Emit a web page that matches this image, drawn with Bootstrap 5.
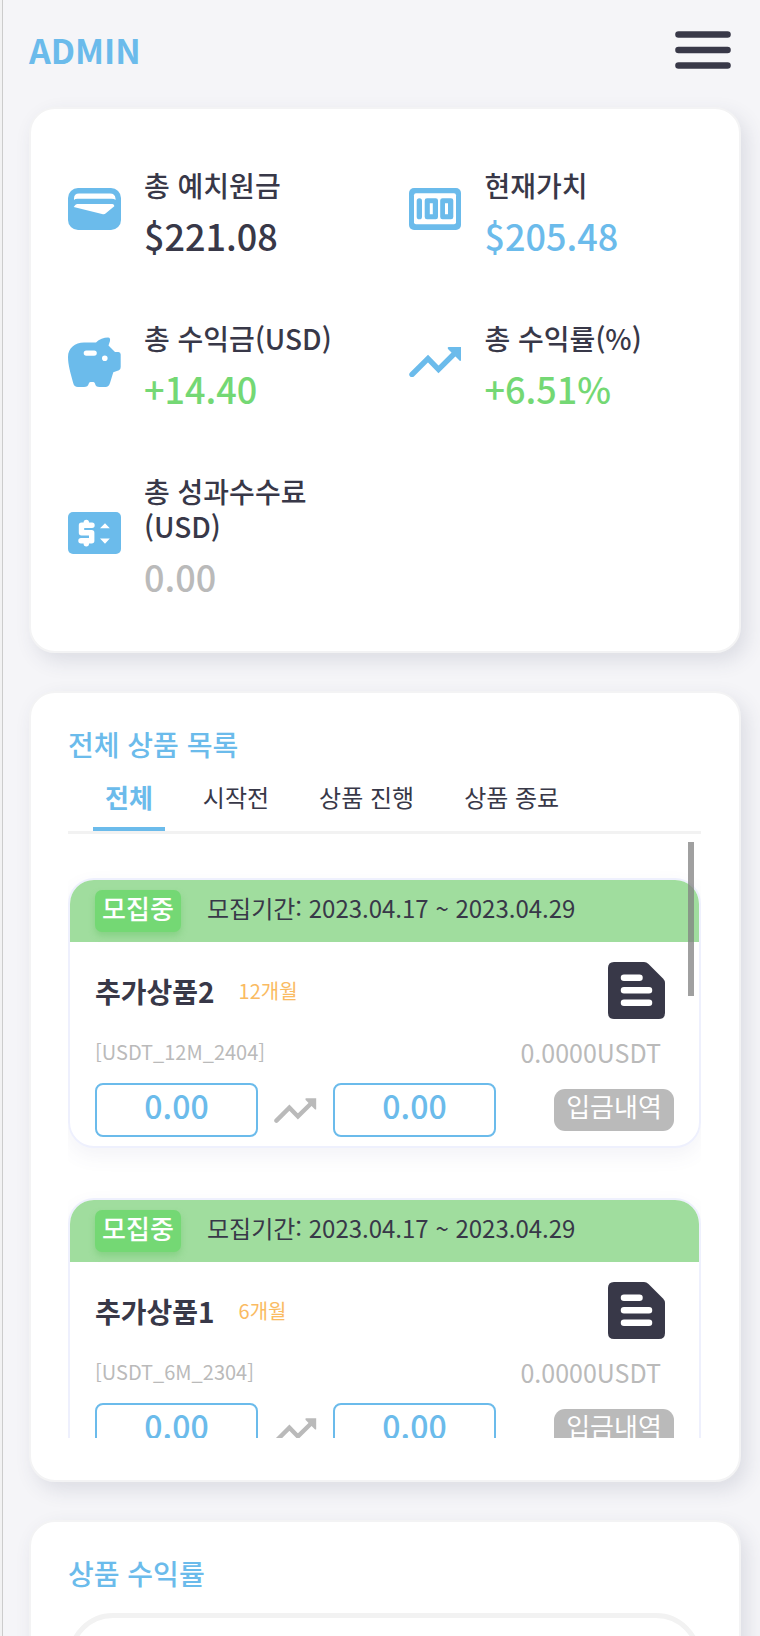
<!DOCTYPE html>
<html lang="ko">
<head>
<meta charset="utf-8">
<meta name="viewport" content="width=device-width, initial-scale=1">
<title>ADMIN</title>
<link href="https://cdn.jsdelivr.net/npm/bootstrap@5.3.0/dist/css/bootstrap.min.css" rel="stylesheet">
<style>
:root { --ink:#383848; --sky:#6bbbeb; --leaf:#74d874; --ash:#bababa; --haze:#f5f5f8; }
body { background:#f2f2f3; color:var(--ink); font-family:"Noto Sans CJK KR","Noto Sans",sans-serif; padding-left:2px; }
.screen { background:var(--haze); border-left:1px solid #ccc; }
.topbar { height:107px; padding:0 29px 8px 26px; }
.brand { font-size:34px; line-height:48px; color:var(--sky); }
.menu-btn svg, .menu-btn { display:block; }
.panel { margin:0 19px 38px 26px; padding:0 38px 0 37px; background:#fff; border:2px solid #f3f3f4; border-radius:26px; box-shadow:6px 8px 20px rgba(56,60,90,.13); flex:none; }
.sky { color:var(--sky); } .leaf { color:var(--leaf); } .ash { color:var(--ash); }
.stats { display:grid; grid-template-columns:1fr 1fr; gap:59px 48px; padding:59px 0 48px; }
.stat { gap:23px; }
.stat-icon { width:53px; margin-bottom:12px; color:var(--sky); flex:none; }
.stat-icon svg { display:block; margin:auto; }
.stat dt { font-size:28px; line-height:35px; font-weight:500; }
.stat dd { font-size:36px; line-height:53px; font-weight:500; margin:6px 0 0; }
.panel-title { font-size:28px; line-height:35px; font-weight:500; color:var(--sky); margin:0; padding-top:34px; }
.tabs { border-bottom:3px solid #f2f2f2; padding-left:25px; gap:26px; margin-top:14px; }
.tabs button { background:none; border:0; border-bottom:4px solid transparent; padding:0 12px 10px; height:55px; font-size:24px; line-height:36px; color:var(--ink); }
.tabs button.active { color:var(--sky); border-color:var(--sky); font-size:26px; font-weight:700; }
.scroll-wrap { position:relative; margin-bottom:42px; }
.scroll-area { height:604px; overflow-y:auto; scrollbar-width:none; padding-top:44px; }
.scroll-area::-webkit-scrollbar { display:none; }
.thumb { position:absolute; top:8px; right:7px; width:6px; height:154px; background:rgba(128,128,128,.75); }
.product { border:2px solid #eef0fd; border-radius:26px; overflow:hidden; margin-bottom:50px; box-shadow:0 8px 20px rgba(80,80,140,.07); }
.product header { height:62px; background:#a0dd9e; padding:0 25px; gap:26px; font-size:24px; }
.state { background:var(--leaf); color:#fff; font-size:26px; line-height:36px; height:42px; width:86px; border-radius:7px; font-weight:500; text-align:center; box-shadow:0 4px 6px rgba(90,190,90,.35); }
.period { line-height:36px; padding-bottom:6px; }
.product-body { padding:20px 25px 9px; }
.product-name { font-size:28px; line-height:36px; font-weight:700; margin:0; }
.term { font-size:20px; line-height:36px; color:#fabb62; }
.line-top { height:57px; padding-right:9px; }
.line-code { font-size:25px; line-height:36px; margin:15px 0 13px; padding-right:13px; }
.code { font-size:20px; }
.amount { width:163px; height:54px; border:2px solid var(--sky); border-radius:8px; font-size:32px; line-height:40px; font-weight:500; color:var(--sky); text-align:center; }
.pay-btn { width:120px; height:42px; border:0; border-radius:11px; background:var(--ash); color:#fff; font-size:26px; line-height:34px; padding:0 0 8px; white-space:nowrap; }
.chart-box { margin-top:22px; height:240px; border:5px solid #f2f2f2; border-radius:45px; }
</style>
</head>
<body>
<svg class="d-none" aria-hidden="true">
  <symbol id="trend" viewBox="0 0 53 30"><path d="M3 27.500L19 11.500L29.500 22.300L46 6" fill="none" stroke="currentColor" stroke-width="5.400" stroke-linecap="round"/><path d="M39.500 0H52V13.500Q51 14.500 50 13L39 2Q38 .5 39.500 0Z" fill="currentColor"/></symbol>
  <symbol id="doc" viewBox="0 0 57 57"><path d="M6 0H36Q38.500 0 40.500 2L55 16.500Q57 18.500 57 21V51Q57 57 51 57H6Q0 57 0 51V6Q0 0 6 0Z" fill="#383848"/><path d="M16 15.800H31.500M16 28.300H41M16 40.800H41" stroke="#fff" stroke-width="6.500" stroke-linecap="round"/></symbol>
</svg>
<div class="screen vh-100 overflow-hidden d-flex flex-column">
  <nav class="topbar d-flex align-items-center justify-content-between flex-shrink-0">
    <a href="#" class="brand fw-bold text-decoration-none">ADMIN</a>
    <button type="button" class="menu-btn border-0 bg-transparent p-0" aria-label="메뉴">
      <svg width="56" height="38" viewBox="0 0 56 38"><path d="M3.500 3.500H52.500M3.500 19H52.500M3.500 34.500H52.500" stroke="#383848" stroke-width="6.600" stroke-linecap="round"/></svg>
    </button>
  </nav>

  <section class="panel">
    <dl class="stats mb-0">
      <div class="stat d-flex align-items-center">
        <span class="stat-icon"><svg width="53" height="42" viewBox="0 0 53 42"><rect width="53" height="42" rx="10" fill="currentColor"/><path d="M6 12V10.500Q6 5.500 11 5.500H42Q47 5.500 47.500 10.500V12Q46.500 10.800 43.500 10.800H9.500Q7 10.800 6 12ZM5.700 19L7.500 16.800Q8.300 16 9.500 16H44.500Q46.500 16.500 46.300 18.200L37.500 25.500Q36.500 26.500 35 26.200Z" fill="#fff"/></svg></span>
        <div><dt>총 예치원금</dt><dd>$221.08</dd></div>
      </div>
      <div class="stat d-flex align-items-center">
        <span class="stat-icon"><svg width="52" height="42" viewBox="0 0 52 42"><rect width="52" height="42" rx="5" fill="currentColor"/><rect x="5" y="5.300" width="42" height="31" rx="2" fill="#fff"/><rect x="7.700" y="10.300" width="5.300" height="21" rx="2.600" fill="currentColor"/><path fill-rule="evenodd" d="M18 10.300H26.700Q29 10.300 29 12.600V29Q29 31.300 26.700 31.300H18Q15.700 31.300 15.700 29V12.600Q15.700 10.300 18 10.300ZM20.800 15.300V26.300H23.800V15.300ZM33.500 10.300H42Q44.300 10.300 44.300 12.600V29Q44.300 31.300 42 31.300H33.500Q31.200 31.300 31.200 29V12.600Q31.200 10.300 33.500 10.300ZM36 15.300V26.300H39V15.300Z" fill="currentColor"/></svg></span>
        <div><dt>현재가치</dt><dd class="sky">$205.48</dd></div>
      </div>
      <div class="stat d-flex align-items-center">
        <span class="stat-icon"><svg width="53" height="50" viewBox="0 0 53 50"><path fill-rule="evenodd" d="M0 20C0 11 7 5.500 16 5.500H28C31 2 36 .5 40 .5C42 .5 42.300 2 42 4L40.500 8.500L47 15H50.500Q52.700 15 52.700 17.500V30Q52.700 32.500 51 33.300L45.300 35.300L42 46Q40.800 50 37.500 50H31.500Q27.500 50 27 46.500Q26.500 45 25.500 45H22.500Q21 45 20.800 46.500Q20 50 16 50H10Q6 50 5.200 46C2.500 36 0 28 0 20ZM18.300 13.500A2.500 2.500 0 0 0 18.300 18.700H26.200A2.500 2.500 0 0 0 26.200 13.500ZM34 21.300A2.800 2.800 0 1 0 39.600 21.300A2.800 2.800 0 1 0 34 21.300Z" fill="currentColor"/></svg></span>
        <div><dt>총 수익금(USD)</dt><dd class="leaf">+14.40</dd></div>
      </div>
      <div class="stat d-flex align-items-center">
        <span class="stat-icon"><svg width="53" height="30"><use href="#trend"/></svg></span>
        <div><dt>총 수익률(%)</dt><dd class="leaf">+6.51%</dd></div>
      </div>
      <div class="stat d-flex align-items-center">
        <span class="stat-icon"><svg width="53" height="42" viewBox="0 0 53 42"><rect width="53" height="42" rx="5" fill="currentColor"/><path d="M24 13.300H13.500V20.800H23.700V28.700H13M18.300 13V10.500M18.300 29V31.800" fill="none" stroke="#fff" stroke-width="5.400" stroke-linecap="round" stroke-linejoin="round"/><path d="M32 16.300L37 11.200L41.800 16.300ZM32 26.500H41.800L37 31.800Z" fill="#fff"/></svg></span>
        <div><dt>총 성과수수료(USD)</dt><dd class="ash">0.00</dd></div>
      </div>
    </dl>
  </section>

  <section class="panel">
    <h2 class="panel-title">전체 상품 목록</h2>
    <div class="tabs d-flex" role="tablist">
      <button type="button" role="tab" class="active" aria-selected="true">전체</button>
      <button type="button" role="tab" aria-selected="false">시작전</button>
      <button type="button" role="tab" aria-selected="false">상품 진행</button>
      <button type="button" role="tab" aria-selected="false">상품 종료</button>
    </div>
    <div class="scroll-wrap">
      <div class="scroll-area">
        <article class="product">
          <header class="d-flex align-items-center"><span class="state">모집중</span><span class="period">모집기간: 2023.04.17 ~ 2023.04.29</span></header>
          <div class="product-body">
            <div class="line-top d-flex align-items-center justify-content-between">
              <div class="d-flex align-items-center gap-4"><h3 class="product-name">추가상품2</h3><span class="term">12개월</span></div>
              <svg width="57" height="57"><use href="#doc"/></svg>
            </div>
            <div class="line-code ash d-flex justify-content-between"><span class="code">[USDT_12M_2404]</span><span>0.0000USDT</span></div>
            <div class="d-flex align-items-center justify-content-between">
              <div class="d-flex align-items-center gap-3"><div class="amount">0.00</div><svg class="ash" width="43" height="25"><use href="#trend"/></svg><div class="amount">0.00</div></div>
              <button type="button" class="pay-btn">입금내역</button>
            </div>
          </div>
        </article>
        <article class="product">
          <header class="d-flex align-items-center"><span class="state">모집중</span><span class="period">모집기간: 2023.04.17 ~ 2023.04.29</span></header>
          <div class="product-body">
            <div class="line-top d-flex align-items-center justify-content-between">
              <div class="d-flex align-items-center gap-4"><h3 class="product-name">추가상품1</h3><span class="term">6개월</span></div>
              <svg width="57" height="57"><use href="#doc"/></svg>
            </div>
            <div class="line-code ash d-flex justify-content-between"><span class="code">[USDT_6M_2304]</span><span>0.0000USDT</span></div>
            <div class="d-flex align-items-center justify-content-between">
              <div class="d-flex align-items-center gap-3"><div class="amount">0.00</div><svg class="ash" width="43" height="25"><use href="#trend"/></svg><div class="amount">0.00</div></div>
              <button type="button" class="pay-btn">입금내역</button>
            </div>
          </div>
        </article>
      </div>
      <div class="thumb"></div>
    </div>
  </section>

  <section class="panel">
    <h2 class="panel-title">상품 수익률</h2>
    <div class="chart-box"></div>
  </section>
</div>
<script src="https://cdn.jsdelivr.net/npm/bootstrap@5.3.0/dist/js/bootstrap.bundle.min.js"></script>
</body>
</html>
